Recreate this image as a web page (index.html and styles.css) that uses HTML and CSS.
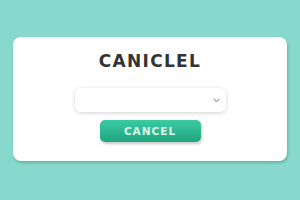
FILE: index.html
```html
<!DOCTYPE html>
<html lang="en">
<head>
  <meta charset="UTF-8"/>
  <meta name="viewport" content="width=device-width,initial-scale=1.0"/>
  <title>Caniclel</title>
  <link rel="stylesheet" href="styles.css">
</head>
<body>
  <div class="card">
    <h1>CANICLEL</h1>
    <div class="picker">
      <svg width="7" height="5" viewBox="0 0 7 5"><path d="M1 1.2 L3.5 3.6 L6 1.2" fill="none" stroke="#9a9a9a" stroke-width="1.1" stroke-linecap="round"/></svg>
    </div>
    <button class="cancel">CANCEL</button>
  </div>
</body>
</html>
```

FILE: styles.css
```css
html, body { margin:0; height:100%; }
body { background:#88d9cd; padding:37px 13px 0; box-sizing:border-box; font-family:'DejaVu Sans', sans-serif; }
.card { width:274px; height:124px; background:#fff; border-radius:8px; box-shadow:1px 2px 3px rgba(40,110,100,0.35); display:flex; flex-direction:column; align-items:center; box-sizing:border-box; padding-top:14px; }
h1 { margin:0; font-size:17px; line-height:20px; font-weight:bold; letter-spacing:1.3px; color:#343434; }
.picker { width:151px; height:24px; margin-top:17px; border-radius:6px; background:#fff; box-shadow:0 1px 4px rgba(0,0,0,0.18); display:flex; align-items:center; justify-content:flex-end; padding-right:6px; box-sizing:border-box; margin-left:0; }
.cancel { margin-top:8px; width:101px; height:22px; border:none; border-radius:5px; background:linear-gradient(#3ccaa2, #1fa67f); color:#dcf6ec; font-family:'DejaVu Sans', sans-serif; font-weight:bold; font-size:10.5px; letter-spacing:1px; padding:0; box-shadow:1px 2px 3px rgba(0,0,0,0.22); }
```
